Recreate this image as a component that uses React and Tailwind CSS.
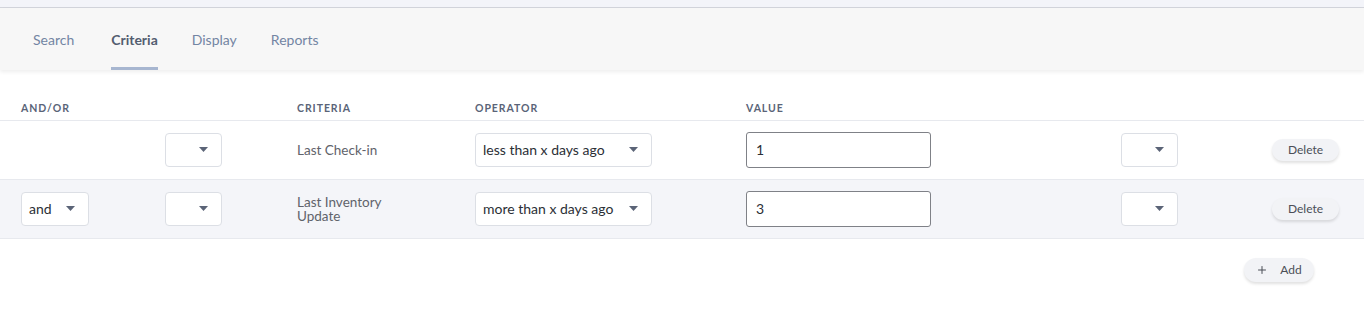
import { Plus } from 'lucide-react';

const cols = 'grid grid-cols-[144px_132px_178px_271px_375px_151px_1fr] pl-[21px]';

function Caret() {
  return (
    <svg width="9" height="5" viewBox="0 0 9 5" className="shrink-0">
      <path d="M0 0h9L4.5 5z" fill="#5b6477" />
    </svg>
  );
}

function Select({ value = '', width }) {
  return (
    <div
      className={`flex items-center justify-between h-[34px] pl-[7px] pr-[13px] pb-[1px] bg-white border border-[#dcdfe5] rounded-[4px] text-[14px] text-[#2b2f36] ${width}`}
    >
      <span>{value}</span>
      <Caret />
    </div>
  );
}

function ValueInput({ value }) {
  return (
    <div className="flex items-center h-[36px] w-[185px] px-[9px] pb-[1px] bg-white border border-[#7f8187] rounded-[3px] text-[14px] text-[#2b2f36]">
      {value}
    </div>
  );
}

function PillButton({ children, className = '' }) {
  return (
    <button
      className={`flex items-center justify-center bg-[#f2f3f6] rounded-full shadow-[0_2px_3px_rgba(0,0,0,0.12)] text-[12px] text-[#4b4f57] ${className}`}
    >
      {children}
    </button>
  );
}

const rows = [
  { andor: null, criteria: ['Last Check-in'], op: 'less than x days ago', val: '1', bg: 'bg-white' },
  { andor: 'and', criteria: ['Last Inventory', 'Update'], op: 'more than x days ago', val: '3', bg: 'bg-[#f4f5f9]' },
];

export default function App() {
  const tabs = ['Search', 'Criteria', 'Display', 'Reports'];

  return (
    <div className="w-[1364px] h-[319px] bg-white font-['Lato','Open_Sans',sans-serif] overflow-hidden">
      <div className="h-[8px] bg-[#f3f4f9] border-b border-[#d3d5dc]" />
      <div className="h-[62px] bg-[#f7f7f7] shadow-[0_2px_4px_rgba(0,0,0,0.07)] flex items-end pl-[33px] gap-[34px]">
        {tabs.map((t) => {
          const active = t === 'Criteria';
          return (
            <div
              key={t}
              className={`h-full flex items-center pt-[4px] border-b-[3px] text-[14px] ${
                active ? 'ml-[3px] border-[#a7b6d0] text-[#535d70] font-bold' : 'border-transparent text-[#7385a3]'
              }`}
            >
              {t}
            </div>
          );
        })}
      </div>

      <div className="mt-[29px]">
        <div className={`${cols} h-[22px] items-center pb-[2px] border-b border-[#e7e9ee] text-[10.5px] font-bold tracking-[0.09em] text-[#5a6478]`}>
          <div>AND/OR</div>
          <div />
          <div>CRITERIA</div>
          <div>OPERATOR</div>
          <div>VALUE</div>
          <div />
          <div />
        </div>

        {rows.map((r, i) => (
          <div key={i} className={`${cols} h-[59px] items-center border-b border-[#e7e9ee] ${r.bg}`}>
            <div>{r.andor && <Select value={r.andor} width="w-[68px]" />}</div>
            <div>
              <Select width="w-[57px]" />
            </div>
            <div className="text-[13.5px] leading-[14px] pb-[1px] text-[#5f636b]">
              {r.criteria.map((c) => (
                <div key={c}>{c}</div>
              ))}
            </div>
            <div>
              <Select value={r.op} width="w-[177px]" />
            </div>
            <div>
              <ValueInput value={r.val} />
            </div>
            <div>
              <Select width="w-[57px]" />
            </div>
            <div>
              <PillButton className="w-[67px] h-[22px]">Delete</PillButton>
            </div>
          </div>
        ))}

        <div className="flex justify-end pr-[50px] pt-[19px]">
          <PillButton className="w-[70px] h-[24px] gap-[12px] text-[12.5px]">
            <Plus size={12} strokeWidth={2} className="text-[#4b4f57]" />
            <span>Add</span>
          </PillButton>
        </div>
      </div>
    </div>
  );
}
